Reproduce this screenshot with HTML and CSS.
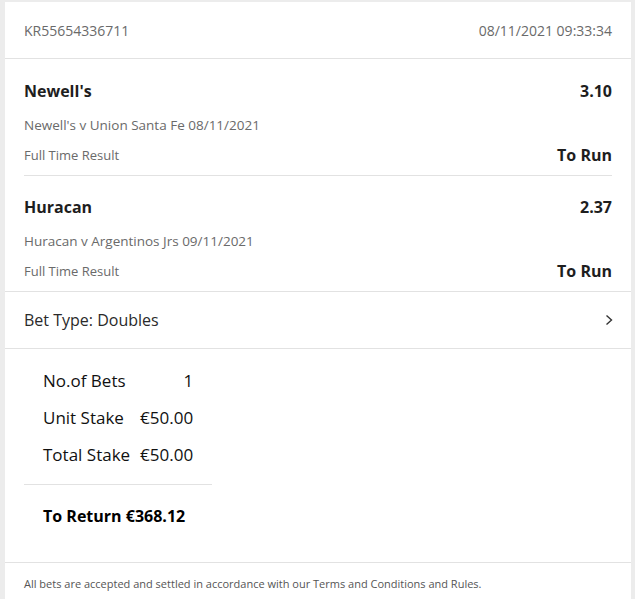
FILE: index.html
```html
<!DOCTYPE html>
<html>
<head>
<meta charset="utf-8">
<link rel="stylesheet" href="styles.css">
</head>
<body>
<div class="card">
  <div class="header">
    <span>KR55654336711</span>
    <span>08/11/2021 09:33:34</span>
  </div>
  <div class="selections">
    <div class="selection">
      <div class="row title"><span>Newell's</span><span>3.10</span></div>
      <div class="row sub"><span>Newell's v Union Santa Fe 08/11/2021</span></div>
      <div class="row market"><span>Full Time Result</span><span class="status">To Run</span></div>
    </div>
    <div class="selection">
      <div class="row title"><span>Huracan</span><span>2.37</span></div>
      <div class="row sub"><span>Huracan v Argentinos Jrs 09/11/2021</span></div>
      <div class="row market"><span>Full Time Result</span><span class="status">To Run</span></div>
    </div>
  </div>
  <div class="bettype">
    <span>Bet Type: Doubles</span>
    <svg class="chev" width="10" height="12" viewBox="0 0 10 12"><path d="M2.5 1.5 L7.5 6 L2.5 10.5" fill="none" stroke="#333" stroke-width="1.4"/></svg>
  </div>
  <div class="summary">
    <div class="stakes">
      <span class="lbl">No.of Bets</span><span class="val">1</span>
      <span class="lbl">Unit Stake</span><span class="val">€50.00</span>
      <span class="lbl">Total Stake</span><span class="val">€50.00</span>
    </div>
    <div class="return">To Return €368.12</div>
  </div>
  <div class="footer">All bets are accepted and settled in accordance with our Terms and Conditions and Rules.</div>
</div>
</body>
</html>
```
FILE: styles.css
```css
html, body {
  margin: 0;
  padding: 0;
}
body {
  background: #ececec;
  font-family: "Open Sans", "Liberation Sans", sans-serif;
  color: #222;
  height: 599px;
  overflow: hidden;
}
.card {
  background: #fff;
  margin: 2px 4px 0 5px;
  width: 626px;
  min-height: 597px;
}
.header {
  height: 56px;
  padding: 0 19px;
  display: flex;
  justify-content: space-between;
  align-items: center;
  font-size: 14px;
  color: #6a6a6a;
  border-bottom: 1px solid #e2e2e2;
}
.selections {
  padding: 0 19px;
  border-bottom: 1px solid #e2e2e2;
}
.selection {
  padding: 20px 0 8px;
  border-bottom: 1px solid #e2e2e2;
}
.selection:last-child {
  border-bottom: none;
  padding-top: 19px;
  padding-bottom: 8px;
}
.row {
  display: flex;
  justify-content: space-between;
  align-items: center;
  height: 24px;
}
.title {
  font-size: 16px;
  font-weight: 700;
  color: #1e1e1e;
}
.sub {
  margin-top: 10px;
  font-size: 13.5px;
  color: #6a6a6a;
}
.market {
  margin-top: 6px;
  font-size: 13px;
  color: #6a6a6a;
}
.status {
  font-size: 16px;
  font-weight: 700;
  color: #1e1e1e;
}
.bettype {
  height: 56px;
  padding: 0 19px;
  display: flex;
  justify-content: space-between;
  align-items: center;
  font-size: 16px;
  color: #2a2a2a;
  border-bottom: 1px solid #e2e2e2;
}
.chev {
  margin-right: -2px;
}
.summary {
  padding: 13px 19px 34px;
  border-bottom: 1px solid #e2e2e2;
}
.stakes {
  display: grid;
  grid-template-columns: auto auto;
  justify-content: start;
  column-gap: 10px;
  width: 188px;
  box-sizing: border-box;
  padding: 0 0 11px 19px;
  border-bottom: 1px solid #e2e2e2;
  font-size: 17px;
  color: #111;
}
.lbl, .val {
  height: 37px;
  line-height: 37px;
}
.val {
  text-align: right;
}
.return {
  margin-top: 19px;
  padding-left: 19px;
  height: 24px;
  line-height: 24px;
  font-size: 16px;
  font-weight: 700;
  color: #000;
}
.footer {
  padding: 0 19px;
  height: 36px;
  line-height: 42px;
  font-size: 11px;
  color: #555;
}
```
